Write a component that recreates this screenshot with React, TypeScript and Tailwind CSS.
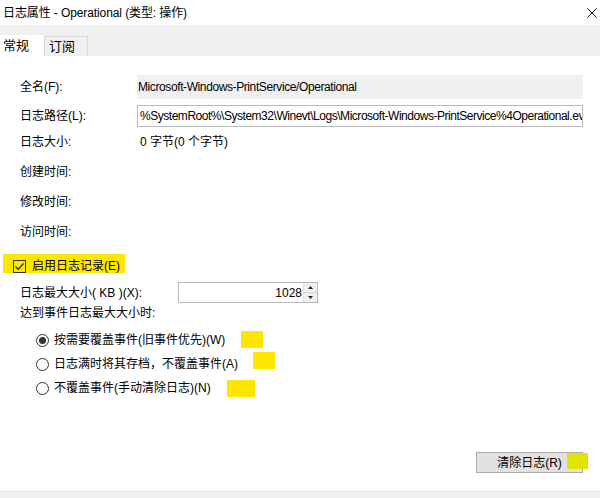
import React from 'react';

const font = "font-['Liberation_Sans','Noto_Sans_CJK_SC',sans-serif]";

const Radio = ({ checked, label, mark }: { checked?: boolean; label: string; mark: string }) => (
  <div className="h-[24px] flex items-center pl-[36px] relative">
    <span className="w-[13px] h-[13px] rounded-full border border-[#333] flex items-center justify-center bg-white">
      {checked && <span className="w-[7px] h-[7px] rounded-full bg-[#333]" />}
    </span>
    <span className="ml-[5px]">{label}</span>
    <span className={`absolute h-[17px] bg-[#ffe600] ${mark}`} />
  </div>
);

export default function App() {
  return (
    <div className={`w-[600px] h-[498px] bg-white text-black text-[12px] flex flex-col overflow-hidden ${font}`}>
      {/* title bar */}
      <div className="h-[25px] flex items-center justify-between pl-[3px] pr-[3px] shrink-0">
        <span className="text-[12px] tracking-[-0.1px]">日志属性 - Operational (类型: 操作)</span>
        <svg width="10" height="10" viewBox="0 0 10 10">
          <path d="M0.5 0.5 L9.5 9.5 M9.5 0.5 L0.5 9.5" stroke="#111" strokeWidth="1" />
        </svg>
      </div>

      {/* tabs */}
      <div className="h-[31px] bg-[#f0f0f0] flex items-end shrink-0">
        <div className="w-[44px] h-[21px] bg-white pl-[3px] flex items-center text-[13px]">常规</div>
        <div className="w-[44px] h-[20px] border border-b-0 border-[#d9d9d9] pl-[4px] flex items-center text-[13px]">订阅</div>
      </div>

      {/* body */}
      <div className="flex-1 flex flex-col">
        <div className="mt-[19px] h-[24px] flex items-center">
          <span className="w-[137px] pl-[20px] shrink-0">全名(F):</span>
          <div className="w-[446px] h-full bg-[#f0f0f0] flex items-center pl-[1px] tracking-[-0.4px]">Microsoft-Windows-PrintService/Operational</div>
        </div>
        <div className="mt-[6px] h-[22px] flex items-center">
          <span className="w-[137px] pl-[20px] shrink-0">日志路径(L):</span>
          <div className="w-[446px] h-full border border-[#b9b9b9] flex items-center pl-[2px] overflow-hidden whitespace-nowrap tracking-[-0.47px]">
            %SystemRoot%\System32\Winevt\Logs\Microsoft-Windows-PrintService%4Operational.evtx
          </div>
        </div>
        <div className="h-[30px] flex items-center">
          <span className="w-[140px] pl-[20px] shrink-0">日志大小:</span>
          <span>0 字节(0 个字节)</span>
        </div>
        <div className="h-[30px] flex items-center pl-[20px]">创建时间:</div>
        <div className="h-[30px] flex items-center pl-[20px]">修改时间:</div>
        <div className="h-[30px] flex items-center pl-[20px]">访问时间:</div>

        <div className="mt-[9px] h-[20px] flex items-center relative">
          <span className="absolute left-[3px] top-[-2px] w-[122px] h-[19px] bg-[#ffe600]" />
          <span className="relative ml-[13px] w-[13px] h-[13px] border border-[#333] flex items-center justify-center">
            <svg width="11" height="11" viewBox="0 0 11 11">
              <path d="M1.5 5.5 L4.2 8.3 L9.5 2.5" stroke="#222" strokeWidth="1.2" fill="none" />
            </svg>
          </span>
          <span className="relative ml-[6px]">启用日志记录(E)</span>
        </div>

        <div className="mt-[6px] h-[21px] flex items-center">
          <span className="w-[178px] pl-[20px] shrink-0">日志最大大小( KB )(X):</span>
          <div className="w-[140px] h-full border border-[#b9b9b9] flex">
            <div className="flex-1 flex items-center justify-end pr-[1px]">1028</div>
            <div className="w-[14px] flex flex-col border-l border-[#e3e3e3]">
              <div className="flex-1 bg-[#f0f0f0] flex items-center justify-center border-b border-[#d6d6d6]">
                <svg width="5" height="3" viewBox="0 0 5 3"><path d="M0 3 L2.5 0 L5 3 Z" fill="#222" /></svg>
              </div>
              <div className="flex-1 bg-[#f0f0f0] flex items-center justify-center">
                <svg width="5" height="3" viewBox="0 0 5 3"><path d="M0 0 L2.5 3 L5 0 Z" fill="#222" /></svg>
              </div>
            </div>
          </div>
        </div>

        <div className="h-[20px] flex items-center pl-[20px]">达到事件日志最大大小时:</div>

        <div className="mt-[5px] flex flex-col">
          <Radio checked label="按需要覆盖事件(旧事件优先)(W)" mark="left-[241px] w-[22px] top-[3px]" />
          <Radio label="日志满时将其存档，不覆盖事件(A)" mark="left-[253px] w-[22px] top-[0px]" />
          <Radio label="不覆盖事件(手动清除日志)(N)" mark="left-[227px] w-[28px] top-[4px]" />
        </div>

        <div className="mt-auto pb-[18px] flex justify-end pr-[17px]">
          <div className="relative w-[107px] h-[21px] bg-[#e1e1e1] border border-[#adadad] flex items-center justify-center">
            <span>清除日志(R)</span>
            <span className="absolute right-[-6px] top-[0px] w-[21px] h-[16px] bg-[#e3e300]" />
          </div>
        </div>
      </div>

      <div className="h-[7px] bg-[#f0f0f0] border-t border-[#e6e6e6] shrink-0" />
    </div>
  );
}
